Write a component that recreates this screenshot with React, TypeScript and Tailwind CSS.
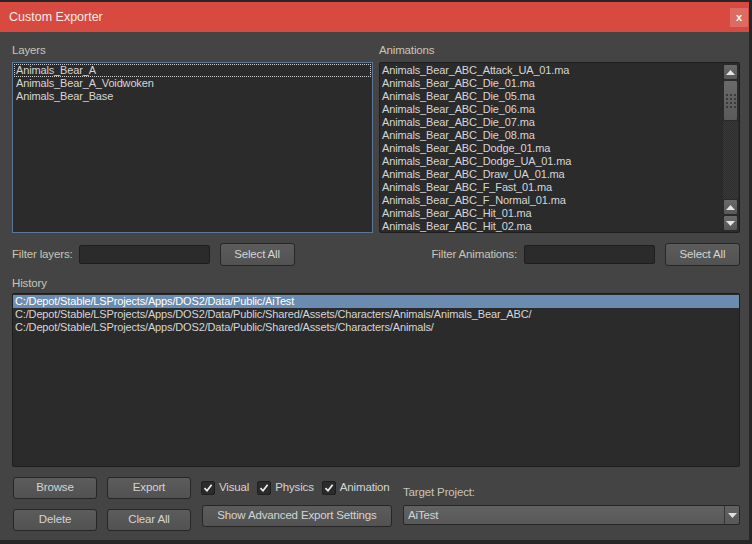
import React from 'react';

const font = { fontFamily: '"Liberation Sans", Arial, sans-serif' };

const animations = [
  'Animals_Bear_ABC_Attack_UA_01.ma',
  'Animals_Bear_ABC_Die_01.ma',
  'Animals_Bear_ABC_Die_05.ma',
  'Animals_Bear_ABC_Die_06.ma',
  'Animals_Bear_ABC_Die_07.ma',
  'Animals_Bear_ABC_Die_08.ma',
  'Animals_Bear_ABC_Dodge_01.ma',
  'Animals_Bear_ABC_Dodge_UA_01.ma',
  'Animals_Bear_ABC_Draw_UA_01.ma',
  'Animals_Bear_ABC_F_Fast_01.ma',
  'Animals_Bear_ABC_F_Normal_01.ma',
  'Animals_Bear_ABC_Hit_01.ma',
  'Animals_Bear_ABC_Hit_02.ma',
];

const history = [
  'C:/Depot/Stable/LSProjects/Apps/DOS2/Data/Public/AiTest',
  'C:/Depot/Stable/LSProjects/Apps/DOS2/Data/Public/Shared/Assets/Characters/Animals/Animals_Bear_ABC/',
  'C:/Depot/Stable/LSProjects/Apps/DOS2/Data/Public/Shared/Assets/Characters/Animals/',
];

const Button: React.FC<{ label: string; className?: string }> = ({ label, className = '' }) => (
  <div
    className={`flex items-center justify-center rounded-[3px] border border-[#262626] bg-gradient-to-b from-[#5c5c5c] to-[#525252] text-[11.5px] text-[#d4d4d4] ${className}`}
  >
    {label}
  </div>
);

const Check: React.FC<{ label: string }> = ({ label }) => (
  <div className="flex items-center gap-[4px]">
    <div className="flex h-[14px] w-[14px] items-center justify-center rounded-[2px] border border-[#1e1e1e] bg-[#2b2b2b]">
      <svg width="10" height="10" viewBox="0 0 10 10">
        <path d="M1.5 5.2 L4 7.8 L8.6 1.8" stroke="#f0f0f0" strokeWidth="1.7" fill="none" />
      </svg>
    </div>
    <span className="text-[11.5px] text-[#d4d4d4]">{label}</span>
  </div>
);

const Arrow: React.FC<{ up?: boolean }> = ({ up }) => (
  <div className="flex h-[16px] w-[15px] items-center justify-center rounded-[2px] border border-[#2a2a2a] bg-gradient-to-b from-[#6a6a6a] to-[#585858]">
    <svg width="9" height="5" viewBox="0 0 9 5">
      <path d={up ? 'M0 5 L4.5 0 L9 5 Z' : 'M0 0 L4.5 5 L9 0 Z'} fill="#e6e6e6" />
    </svg>
  </div>
);

export default function App() {
  return (
    <div className="h-[544px] w-[752px] overflow-hidden bg-[#262626] pt-[2px] tracking-[-0.15px]" style={font}>
      <div className="flex h-[538px] w-[749px] flex-col bg-[#444444]">
        {/* Title bar */}
        <div className="flex h-[30px] items-center bg-[#d84a40] pl-[9px]">
          <span className="text-[12.5px] tracking-normal text-[#f6ece6]">Custom Exporter</span>
          <div className="ml-auto mr-[1px] mt-[1px] flex h-[19px] w-[18px] items-center justify-center bg-[#dd6a63] text-[11px] font-bold text-white">
            x
          </div>
        </div>

        <div className="flex flex-1 flex-col pl-[12px] pr-[9px] pt-[10px]">
          {/* Lists */}
          <div className="flex gap-[6px]">
            <div className="flex w-[361px] flex-col">
              <div className="h-[20px] text-[11.5px] text-[#c9c5b6]">Layers</div>
              <div className="h-[171px] border border-[#5a7896] bg-[#2b2b2b] p-[1px] text-[11px] leading-[13px] text-[#d6d6d6]">
                <div className="border border-dotted border-[#cfcfcf] pl-[1px] leading-[11px]">Animals_Bear_A</div>
                <div className="pl-[2px]">Animals_Bear_A_Voidwoken</div>
                <div className="pl-[2px]">Animals_Bear_Base</div>
              </div>
            </div>
            <div className="flex w-[361px] flex-col">
              <div className="h-[20px] text-[11.5px] text-[#c9c5b6]">Animations</div>
              <div className="flex h-[171px] rounded-[2px] border border-[#1e1e1e] bg-[#2b2b2b] text-[11px] leading-[13px] text-[#d6d6d6]">
                <div className="flex-1 pl-[2px] pt-[1px]">
                  {animations.map((a) => (
                    <div key={a}>{a}</div>
                  ))}
                </div>
                <div className="flex w-[16px] flex-col py-[1px] pr-[1px]">
                  <Arrow up />
                  <div className="flex h-[41px] items-center justify-center rounded-[2px] border border-[#2a2a2a] bg-gradient-to-b from-[#6a6a6a] to-[#5a5a5a]">
                    <div className="grid grid-cols-3 gap-[2px]">
                      {Array.from({ length: 12 }).map((_, i) => (
                        <div key={i} className="h-[2px] w-[2px] bg-[#3a3a3a]" />
                      ))}
                    </div>
                  </div>
                  <div className="flex-1 bg-[repeating-conic-gradient(#3a3a3a_0_25%,#2c2c2c_0_50%)] bg-[length:2px_2px]" />
                  <Arrow up />
                  <Arrow />
                </div>
              </div>
            </div>
          </div>

          {/* Filters */}
          <div className="mt-[10px] flex h-[23px] items-center">
            <span className="text-[11.5px] text-[#c9c5b6]">Filter layers:</span>
            <div className="ml-[6px] h-[19px] w-[131px] rounded-[2px] border border-[#1e1e1e] bg-[#2b2b2b]" />
            <Button label="Select All" className="ml-[10px] h-[23px] w-[75px]" />
            <span className="ml-auto text-[11.5px] text-[#c9c5b6]">Filter Animations:</span>
            <div className="ml-[7px] h-[19px] w-[131px] rounded-[2px] border border-[#1e1e1e] bg-[#2b2b2b]" />
            <Button label="Select All" className="ml-[10px] h-[23px] w-[75px]" />
          </div>

          {/* History */}
          <div className="mt-[9px] h-[18px] text-[11.5px] text-[#c9c5b6]">History</div>
          <div className="h-[174px] rounded-[2px] border border-[#1e1e1e] bg-[#2b2b2b] pt-[1px] text-[11px] leading-[13px] text-[#d6d6d6]">
            {history.map((h, i) => (
              <div key={h} className={`pl-[2px] ${i === 0 ? 'bg-[#6a8cb0] text-white' : ''}`}>
                {h}
              </div>
            ))}
          </div>

          {/* Bottom controls */}
          <div className="mt-[10px] flex">
            <div className="grid grid-cols-[84px_84px] gap-x-[10px] gap-y-[10px] pl-[1px]">
              <Button label="Browse" className="h-[22px]" />
              <Button label="Export" className="h-[22px]" />
              <Button label="Delete" className="h-[22px]" />
              <Button label="Clear All" className="h-[22px]" />
            </div>
            <div className="ml-[10px] flex w-[191px] flex-col">
              <div className="flex h-[22px] items-center gap-[8px]">
                <Check label="Visual" />
                <Check label="Physics" />
                <Check label="Animation" />
              </div>
              <Button label="Show Advanced Export Settings" className="ml-[1px] mt-[6px] h-[22px] w-[190px]" />
            </div>
            <div className="ml-[11px] flex flex-1 flex-col">
              <div className="mt-[7px] h-[21px] text-[11.5px] text-[#c9c5b6]">Target Project:</div>
              <div className="flex h-[20px] rounded-[2px] border border-[#262626] bg-gradient-to-b from-[#626262] to-[#585858]">
                <span className="flex-1 pl-[4px] text-[11.5px] leading-[18px] text-[#d4d4d4]">AiTest</span>
                <div className="flex w-[15px] items-center justify-center border-l border-[#353535]">
                  <svg width="9" height="5" viewBox="0 0 9 5">
                    <path d="M0 0 L4.5 5 L9 0 Z" fill="#e0e0e0" />
                  </svg>
                </div>
              </div>
            </div>
          </div>
        </div>
      </div>
    </div>
  );
}
